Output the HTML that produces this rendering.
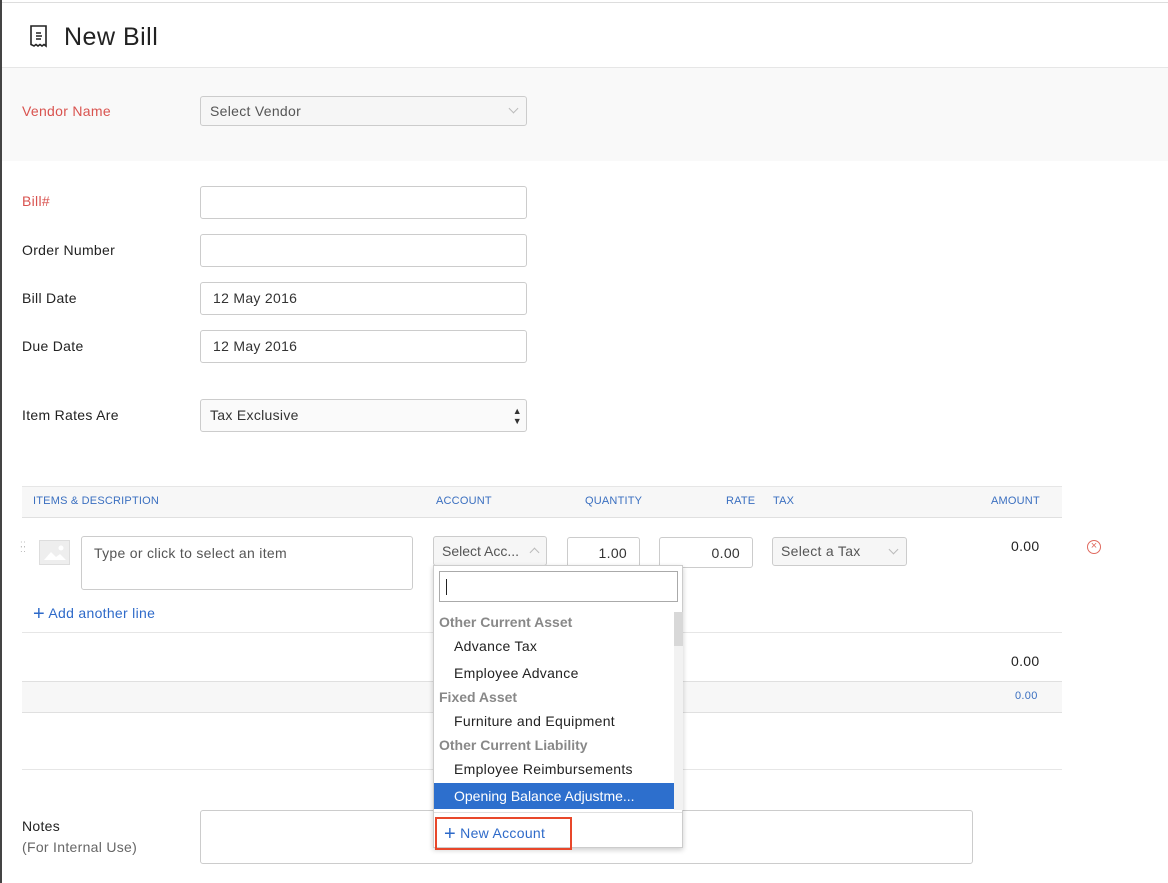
<!DOCTYPE html>
<html><head><style>
*{box-sizing:border-box;margin:0;padding:0}
body{width:1168px;height:883px;position:relative;overflow:hidden;background:#fff;font-family:"Liberation Sans",sans-serif;font-size:14px;color:#222;letter-spacing:0.3px}
.a{position:absolute}
.inp{position:absolute;border:1px solid #ccc;border-radius:3px;background:#fff;padding-left:12px;line-height:30px;font-size:14px;color:#333}
.lbl{position:absolute;left:22px;font-size:14px;color:#222}
.th{position:absolute;top:495px;font-size:11px;color:#3a6fc0;letter-spacing:0.2px}
.it{position:absolute;left:454px;font-size:14px;color:#222}
.grp{position:absolute;left:439px;font-size:14px;color:#888;font-weight:bold;letter-spacing:0}
.chev{position:absolute;width:7px;height:7px;border-right:1px solid #bbb;border-bottom:1px solid #bbb}
</style></head><body>
<div class="a" style="left:0;top:0;width:2px;height:883px;background:#444"></div>
<div class="a" style="left:2px;top:2px;width:1166px;height:1px;background:#ddd"></div>
<svg class="a" style="left:29px;top:24px" width="20" height="26" viewBox="0 0 20 26"><path d="M2 2h15v20l-2-1.5-2 1.5-2-1.5-2 1.5-2-1.5-2 1.5-3-1.5z" fill="none" stroke="#222" stroke-width="1.6"/><path d="M7 9h5M7 12h6M7 15h5" stroke="#222" stroke-width="1.4"/></svg>
<div class="a" style="left:64px;top:23px;font-size:25px;color:#222;letter-spacing:0.5px">New Bill</div>
<div class="a" style="left:2px;top:67px;width:1166px;height:94px;background:#f9f9f9;border-top:1px solid #e6e6e6"></div>
<div class="lbl" style="top:103px;color:#d9534f">Vendor Name</div>
<div class="inp" style="left:200px;top:96px;width:327px;height:30px;background:#f6f6f6;line-height:28px;padding-left:9px;color:#555">Select Vendor<span class="chev" style="right:9px;top:8px;transform:rotate(45deg)"></span></div>
<div class="lbl" style="top:193px;color:#d9534f">Bill#</div>
<div class="inp" style="left:200px;top:186px;width:327px;height:33px"></div>
<div class="lbl" style="top:242px">Order Number</div>
<div class="inp" style="left:200px;top:234px;width:327px;height:33px"></div>
<div class="lbl" style="top:290px">Bill Date</div>
<div class="inp" style="left:200px;top:282px;width:327px;height:33px">12 May 2016</div>
<div class="lbl" style="top:338px">Due Date</div>
<div class="inp" style="left:200px;top:330px;width:327px;height:33px">12 May 2016</div>
<div class="lbl" style="top:407px">Item Rates Are</div>
<div class="inp" style="left:200px;top:399px;width:327px;height:33px;padding-left:9px;background:#fafafa">Tax Exclusive<span class="a" style="right:4px;top:0;font-size:9px;line-height:10px;padding-top:6px">▲<br>▼</span></div>
<div class="a" style="left:22px;top:486px;width:1040px;height:32px;background:#f7f7f7;border-top:1px solid #e6e6e6;border-bottom:1px solid #e0e0e0"></div>
<div class="th" style="left:33px">ITEMS &amp; DESCRIPTION</div>
<div class="th" style="left:436px">ACCOUNT</div>
<div class="th" style="left:585px">QUANTITY</div>
<div class="th" style="left:726px">RATE</div>
<div class="th" style="left:773px">TAX</div>
<div class="th" style="left:991px">AMOUNT</div>
<div class="a" style="left:20px;top:542px;color:#bbb;font-size:10px;line-height:5px">::<br>::</div>
<div class="a" style="left:39px;top:540px;width:31px;height:25px;border:1px solid #ddd;background:#eee"><svg width="29" height="23"><path d="M4 19l7-8 5 5 4-3 6 6z" fill="#fff"/><circle cx="21" cy="7" r="2.5" fill="#fff"/></svg></div>
<div class="inp" style="left:81px;top:536px;width:332px;height:54px;line-height:32px;color:#555">Type or click to select an item</div>
<div class="inp" style="left:433px;top:536px;width:114px;height:30px;line-height:28px;padding-left:8px;color:#555;background:#f6f6f6;letter-spacing:0">Select Acc...<span class="chev" style="right:8px;top:12px;transform:rotate(225deg)"></span></div>
<div class="inp" style="left:567px;top:537px;width:73px;height:31px;text-align:right;padding-right:12px">1.00</div>
<div class="inp" style="left:659px;top:537px;width:94px;height:31px;text-align:right;padding-right:12px">0.00</div>
<div class="inp" style="left:772px;top:537px;width:135px;height:29px;line-height:27px;padding-left:8px;color:#555;background:#f6f6f6">Select a Tax<span class="chev" style="right:9px;top:8px;transform:rotate(45deg)"></span></div>
<div class="a" style="left:1011px;top:538px">0.00</div>
<div class="a" style="left:1087px;top:540px;width:14px;height:14px;border:1px solid #e06a5f;border-radius:50%;color:#e06a5f;font-size:11px;line-height:11px;text-align:center;letter-spacing:0">×</div>
<div class="a" style="left:33px;top:603px;color:#2e6ac9;font-size:14px"><span style="font-size:20px;vertical-align:-2px">+</span> Add another line</div>
<div class="a" style="left:22px;top:632px;width:1040px;height:1px;background:#e6e6e6"></div>
<div class="a" style="left:1011px;top:653px">0.00</div>
<div class="a" style="left:22px;top:681px;width:1040px;height:32px;background:#f7f7f7;border-top:1px solid #e0e0e0;border-bottom:1px solid #e0e0e0"></div>
<div class="a" style="left:1015px;top:690px;font-size:11px;color:#3a6fc0">0.00</div>
<div class="a" style="left:22px;top:769px;width:1040px;height:1px;background:#e6e6e6"></div>
<div class="lbl" style="top:818px">Notes</div>
<div class="lbl" style="top:839px;color:#666">(For Internal Use)</div>
<div class="a" style="left:200px;top:810px;width:773px;height:54px;border:1px solid #ccc;border-radius:3px"></div>
<div class="a" style="left:433px;top:565px;width:250px;height:283px;background:#fff;border:1px solid #ccc;box-shadow:0 2px 5px rgba(0,0,0,.2)"></div>
<div class="a" style="left:439px;top:571px;width:239px;height:31px;border:1px solid #aaa"><div class="a" style="left:6px;top:7px;width:1px;height:16px;background:#222"></div></div>
<div class="a" style="left:674px;top:612px;width:9px;height:198px;background:#f2f2f2"><div style="height:34px;background:#d8d8d8"></div></div>
<div class="grp" style="top:614px">Other Current Asset</div>
<div class="it" style="top:638px">Advance Tax</div>
<div class="it" style="top:665px">Employee Advance</div>
<div class="grp" style="top:689px">Fixed Asset</div>
<div class="it" style="top:713px">Furniture and Equipment</div>
<div class="grp" style="top:737px">Other Current Liability</div>
<div class="it" style="top:761px">Employee Reimbursements</div>
<div class="a" style="left:434px;top:783px;width:240px;height:26px;background:#2d6fcd"></div>
<div class="it" style="top:788px;color:#fff;letter-spacing:0">Opening Balance Adjustme...</div>
<div class="a" style="left:434px;top:812px;width:248px;height:1px;background:#e0e0e0"></div>
<div class="a" style="left:435px;top:817px;width:137px;height:33px;border:2px solid #e8472a"></div>
<div class="a" style="left:444px;top:823px;color:#2e6ac9;font-size:14px"><span style="font-size:20px;vertical-align:-2px">+</span> New Account</div>
</body></html>
